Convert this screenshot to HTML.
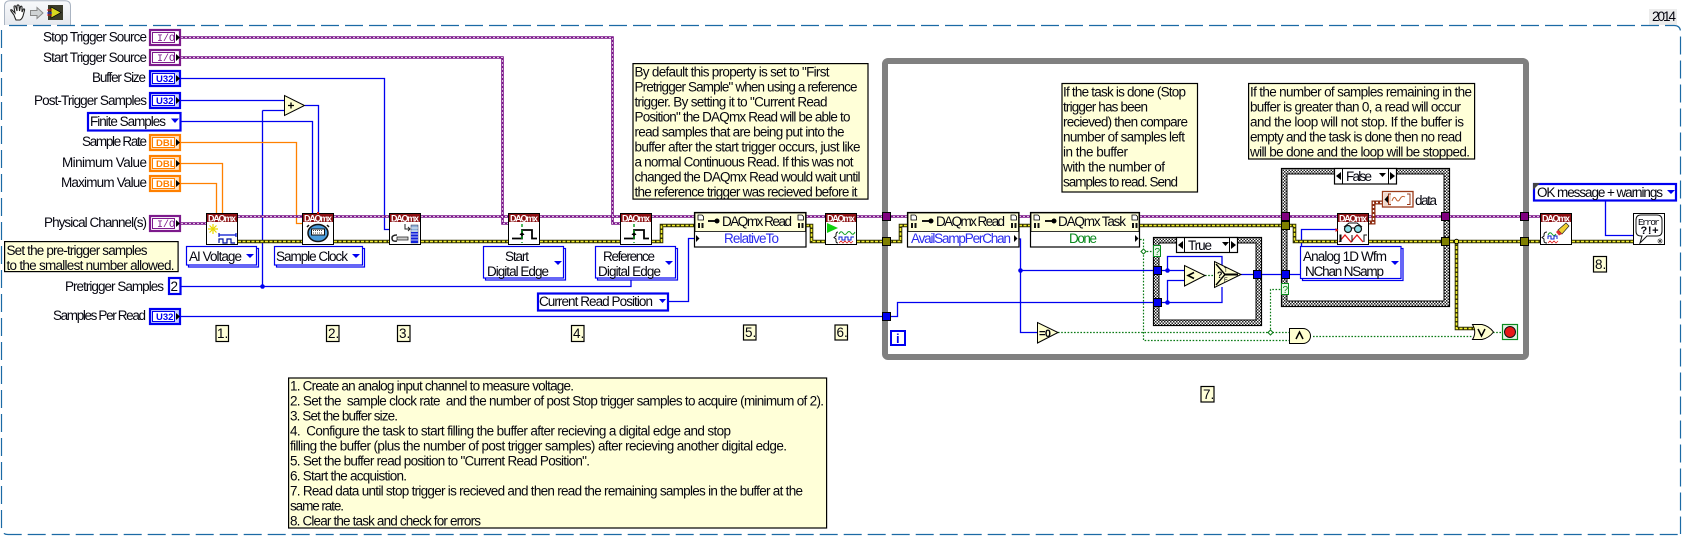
<!DOCTYPE html>
<html><head><meta charset="utf-8"><title>LabVIEW block diagram</title>
<style>
html,body{margin:0;padding:0;background:#fff;width:1682px;height:536px;overflow:hidden}
svg{display:block}
text{font-family:"Liberation Sans",sans-serif;font-size:13.5px;fill:#05050f}
.b{fill:none;stroke:#0000f0;stroke-width:1.3}
.o{fill:none;stroke:#ff8000;stroke-width:1.3}
.p1{fill:none;stroke:#7a1488;stroke-width:2.6}
.p2{fill:none;stroke:#fff;stroke-width:.7;stroke-dasharray:2 2}
.e1{fill:none;stroke:#303000;stroke-width:3.6}
.e2{fill:none;stroke:#f2ee30;stroke-width:1.6;stroke-dasharray:3 1.5}
.g{fill:none;stroke:#0a7a14;stroke-width:1.2;stroke-dasharray:1.6 1.6}
.c{fill:#ffffd8;stroke:#000;stroke-width:1.2}
.tri{fill:#ffffd0;stroke:#000;stroke-width:1}
.h{font-size:9px;font-weight:bold;fill:#fff}
.ring{fill:#fff;stroke:#0000f0;stroke-width:1.2}
.ar{fill:#0000f0}
.tun{stroke:#000;stroke-width:1}
.mono{font-family:"Liberation Mono",monospace;font-size:10px}
.ub{font-size:9.5px;font-weight:bold}
</style></head>
<body>
<svg width="1682" height="536" viewBox="0 0 1682 536" xmlns="http://www.w3.org/2000/svg">
<defs>
<pattern id="dith" width="3" height="3" patternUnits="userSpaceOnUse"><rect width="3" height="3" fill="#fff"/><rect width="1.500" height="1.500" fill="#222"/><rect x="1.500" y="1.500" width="1.500" height="1.500" fill="#222"/></pattern>
<linearGradient id="tabg" x1="0" y1="0" x2="0" y2="1"><stop offset="0" stop-color="#f8f9fb"/><stop offset="1" stop-color="#e6e9ee"/></linearGradient>
</defs>

<!-- toolbar tab -->
<path d="M4.500 25V6Q4.500 .7 10 .7H65Q70.500 .7 70.500 6V25" fill="url(#tabg)" stroke="#aab4c2"/>
<path d="M14 15L11 11Q10 9 12 10L15 13L14 7Q14 5.500 15.500 6L17 11V5.500Q18 4.500 19 5.500L19.500 11L20.500 6.500Q22 5.500 22 7.500L22 12L23.500 9Q25 8.500 24.500 10.500L23 16Q22 19 20 20H16Q15 18 14 15Z" fill="#fff" stroke="#222" stroke-width="1.100"/>
<path d="M30.500 10.500H37V7.500L43 13L37 18.500V15.500H30.500Z" fill="#cfd2d4" stroke="#888"/>
<rect x="48" y="5" width="15" height="15" fill="#3a3a2a"/>
<path d="M51 7V18L61 12.500Z" fill="#d8d820" stroke="#000" stroke-width=".7"/>
<path d="M47 10H52M47 15H52" stroke="#e02020" stroke-width="1"/><path d="M47 13H52" stroke="#2030e0" stroke-width="1"/>

<!-- year -->
<rect x="1649" y="9" width="28" height="16" fill="#ececec"/>
<text x="1652" y="21" textLength="24">2014</text>

<!-- frame -->
<g fill="none" stroke="#1b6aa5" stroke-width="1.200">
<path d="M9 25.500H1674Q1680.500 25.500 1680.500 32V534" stroke-dasharray="18 6"/>
<path d="M1.500 30V527Q1.500 534.500 8 534.500H1680" stroke-dasharray="18 6"/>
</g>

<!-- while loop -->
<rect x="885" y="61" width="641" height="296" rx="3" fill="none" stroke="#808080" stroke-width="6"/>

<!-- case structures -->
<rect x="1153.500" y="237.500" width="108" height="88" fill="url(#dith)" stroke="#000" stroke-width="1.200"/>
<rect x="1159" y="243" width="97" height="77" fill="#fff" stroke="#000" stroke-width="1"/>
<rect x="1281.500" y="168.500" width="168" height="138" fill="url(#dith)" stroke="#000" stroke-width="1.200"/>
<rect x="1287" y="174" width="157" height="127" fill="#fff" stroke="#000" stroke-width="1"/>

<!-- blue wires -->
<path class="b" d="M181 78.500H384.500V229.500H389M181 100.500H284M262.500 110.500H284M262.500 110.500V286.500M181 286.500H631V279M305 105.500H318.500V213M181 121.500H312.500V213M181 316.500H885M889 316.500H897.500V302.500H1153M1019 239H1020.500V332.500H1037M1020.500 270.500H1153M668 301.500H688.500V238.500H694M1262 274.500H1282M1290 274.500H1300M1301.500 246V229.500H1337M1605.500 201V235.500H1633"/>
<path class="b" d="M1162 270.500H1184M1167.500 270.500V256.500H1222V265M1162 302.500H1222V287M1167.500 302.500V280.500H1184M1241 274.500H1253"/>
<circle cx="262.500" cy="286.500" r="2.300" fill="#0000f0"/><circle cx="1020.500" cy="270.500" r="2.300" fill="#0000f0"/>
<circle cx="1167.500" cy="270.500" r="2.300" fill="#0000f0"/><circle cx="1167.500" cy="302.500" r="2.300" fill="#0000f0"/>

<!-- orange wires -->
<path class="o" d="M181 142.500H296.500V223.500H302M181 163.500H222.500V213M181 183.500H216.500V213"/>

<!-- purple wires -->
<path class="p1" d="M181 37.500H612.500V223.500H620M181 57.500H502.500V223.500H508M181 223.500H206M238 216.500H302M334 216.500H389M421 216.500H508M540 216.500H620M652 216.500H694M806 216.500H825M857 216.500H907M1019 216.500H1030M1140 216.500H1337M1369 216.500H1540"/>
<path class="p2" d="M181 37.500H612.500V223.500H620M181 57.500H502.500V223.500H508M181 223.500H206M238 216.500H302M334 216.500H389M421 216.500H508M540 216.500H620M652 216.500H694M806 216.500H825M857 216.500H907M1019 216.500H1030M1140 216.500H1337M1369 216.500H1540"/>

<!-- error wires -->
<path class="e1" d="M238 241.500H302M334 241.500H389M421 241.500H508M540 241.500H620M652 241.500H661.500V225.500H694M806 225.500H811.500V241.500H825M857 241.500H900.500V225.500H907M1019 225.500H1030M1140 225.500H1294.500V241.500H1337M1369 241.500H1540M1572 241.500H1633M1456.500 241.500V328.500H1475"/>
<path class="e2" d="M238 241.500H302M334 241.500H389M421 241.500H508M540 241.500H620M652 241.500H661.500V225.500H694M806 225.500H811.500V241.500H825M857 241.500H900.500V225.500H907M1019 225.500H1030M1140 225.500H1294.500V241.500H1337M1369 241.500H1540M1572 241.500H1633M1456.500 241.500V328.500H1475"/>
<circle cx="1456.500" cy="241.500" r="2.200" fill="#f2ee30" stroke="#000"/>

<!-- green boolean wires -->
<path class="g" d="M1140 239.500H1143.500V340.500H1289M1143.500 251.500H1153M1058 332.500H1289M1270.500 332.500V289.500H1281M1313 336.500H1472M1205 275.500H1214M1493 332.500H1502"/>
<path d="M1143.500 249L1146 251.500L1143.500 254L1141 251.500Z" fill="#fff" stroke="#0a7a14"/>
<path d="M1270.500 330L1273 332.500L1270.500 335L1268 332.500Z" fill="#fff" stroke="#0a7a14"/>

<!-- data wire -->
<path d="M1368 222.500H1373.500V202.500H1382" fill="none" stroke="#8e2c10" stroke-width="4"/>
<path d="M1368 222.500H1373.500V202.500H1382" fill="none" stroke="#fff" stroke-width="1.400" stroke-dasharray="2 2"/>

<!-- tunnels -->
<g class="tun">
<rect x="882.500" y="212.500" width="8" height="8" fill="#800080"/>
<rect x="882.500" y="237.500" width="8" height="8" fill="#808000"/>
<rect x="882.500" y="312.500" width="8" height="8" fill="#0000f0"/>
<rect x="1520.500" y="212.500" width="8" height="8" fill="#800080"/>
<rect x="1520.500" y="237.500" width="8" height="8" fill="#808000"/>
<rect x="1281.500" y="212.500" width="8" height="8" fill="#800080"/>
<rect x="1281.500" y="221.500" width="8" height="8" fill="#808000"/>
<rect x="1281.500" y="270.500" width="8" height="8" fill="#0000f0"/>
<rect x="1441.500" y="212.500" width="8" height="8" fill="#800080"/>
<rect x="1441.500" y="237.500" width="8" height="8" fill="#808000"/>
<rect x="1153.500" y="266.500" width="8" height="8" fill="#0000f0"/>
<rect x="1153.500" y="298.500" width="8" height="8" fill="#0000f0"/>
<rect x="1253.500" y="270.500" width="8" height="8" fill="#0000f0"/>
</g>

<!-- selector terminals -->
<rect x="1153.500" y="245.500" width="7" height="11" fill="#e8f8e8" stroke="#0a8a1e"/>
<text x="1154.500" y="255" style="font-size:10px;fill:#0a8a1e">?</text>
<rect x="1281.500" y="283.500" width="7" height="11" fill="#e8f8e8" stroke="#0a8a1e"/>
<text x="1282.500" y="293" style="font-size:10px;fill:#0a8a1e">?</text>

<!-- iteration -->
<rect x="891" y="331" width="14" height="14" fill="#fff" stroke="#0000f0" stroke-width="2"/>
<text x="896" y="343" style="font-weight:bold;fill:#0000f0;font-size:13px">i</text>

<!-- case selectors -->
<rect x="1176.500" y="237.500" width="61" height="15" fill="#fff" stroke="#000" stroke-width="1.200"/>
<path d="M1184.500 238V252M1229.500 238V252" stroke="#000"/>
<path d="M1183 241V249L1178 245ZM1231 241V249L1236 245ZM1222 242H1229L1225.500 246Z" fill="#000"/>
<text x="1188" y="250" textLength="24">True</text>
<rect x="1334.500" y="168.500" width="62" height="15.500" fill="#fff" stroke="#000" stroke-width="1.200"/>
<path d="M1342.500 169V184M1388.500 169V184" stroke="#000"/>
<path d="M1341 172V180L1336 176ZM1390 172V180L1395 176ZM1379 173H1386L1382.500 177Z" fill="#000"/>
<text x="1346" y="181" textLength="26">False</text>

<!-- labels -->
<text x="43" y="41.500" textLength="104">Stop Trigger Source</text>
<text x="43" y="62" textLength="104">Start Trigger Source</text>
<text x="92" y="82" textLength="54">Buffer Size</text>
<text x="34" y="105" textLength="113">Post-Trigger Samples</text>
<text x="82" y="146" textLength="65">Sample Rate</text>
<text x="62" y="167" textLength="85">Minimum Value</text>
<text x="61" y="187" textLength="86">Maximum Value</text>
<text x="44" y="227" textLength="103">Physical Channel(s)</text>
<text x="65" y="291" textLength="99">Pretrigger Samples</text>
<text x="53" y="320" textLength="93">Samples Per Read</text>

<!-- terminals I/O -->
<g>
<rect x="150" y="30" width="30" height="15" fill="#fff" stroke="#7d1a8c" stroke-width="2.200"/><rect x="152.500" y="32.500" width="22" height="10" fill="#fff" stroke="#7d1a8c"/><text class="mono" x="157" y="41" style="fill:#7d1a8c">I/O</text><path d="M176 34V41L180 37.500Z" fill="#000"/>
<rect x="150" y="50" width="30" height="15" fill="#fff" stroke="#7d1a8c" stroke-width="2.200"/><rect x="152.500" y="52.500" width="22" height="10" fill="#fff" stroke="#7d1a8c"/><text class="mono" x="157" y="61" style="fill:#7d1a8c">I/O</text><path d="M176 54V61L180 57.500Z" fill="#000"/>
<rect x="150" y="216" width="30" height="15" fill="#fff" stroke="#7d1a8c" stroke-width="2.200"/><rect x="152.500" y="218.500" width="22" height="10" fill="#fff" stroke="#7d1a8c"/><text class="mono" x="157" y="227" style="fill:#7d1a8c">I/O</text><path d="M176 220V227L180 223.500Z" fill="#000"/>
</g>
<!-- terminals U32 -->
<g>
<rect x="150" y="71" width="30" height="15" fill="#c8d0ff" stroke="#0000f0" stroke-width="2.200"/><rect x="152.500" y="73.500" width="22" height="10" fill="#fff" stroke="#0000f0"/><text class="ub" x="156" y="82" style="fill:#0000f0">U32</text><path d="M176 75V82L180 78.500Z" fill="#000"/>
<rect x="150" y="93" width="30" height="15" fill="#c8d0ff" stroke="#0000f0" stroke-width="2.200"/><rect x="152.500" y="95.500" width="22" height="10" fill="#fff" stroke="#0000f0"/><text class="ub" x="156" y="104" style="fill:#0000f0">U32</text><path d="M176 97V104L180 100.500Z" fill="#000"/>
<rect x="150" y="309" width="30" height="15" fill="#c8d0ff" stroke="#0000f0" stroke-width="2.200"/><rect x="152.500" y="311.500" width="22" height="10" fill="#fff" stroke="#0000f0"/><text class="ub" x="156" y="320" style="fill:#0000f0">U32</text><path d="M176 313V320L180 316.500Z" fill="#000"/>
</g>
<!-- terminals DBL -->
<g>
<rect x="150" y="135" width="30" height="15" fill="#ffe2c0" stroke="#ff8000" stroke-width="2.200"/><rect x="152.500" y="137.500" width="22" height="10" fill="#fff" stroke="#ff8000"/><text class="ub" x="156" y="146" style="fill:#ff8000">DBL</text><path d="M176 139V146L180 142.500Z" fill="#000"/>
<rect x="150" y="156" width="30" height="15" fill="#ffe2c0" stroke="#ff8000" stroke-width="2.200"/><rect x="152.500" y="158.500" width="22" height="10" fill="#fff" stroke="#ff8000"/><text class="ub" x="156" y="167" style="fill:#ff8000">DBL</text><path d="M176 160V167L180 163.500Z" fill="#000"/>
<rect x="150" y="176" width="30" height="15" fill="#ffe2c0" stroke="#ff8000" stroke-width="2.200"/><rect x="152.500" y="178.500" width="22" height="10" fill="#fff" stroke="#ff8000"/><text class="ub" x="156" y="187" style="fill:#ff8000">DBL</text><path d="M176 180V187L180 183.500Z" fill="#000"/>
</g>

<!-- constants -->
<rect x="88" y="113" width="92.500" height="17.500" fill="#fff" stroke="#0000f0" stroke-width="2.200"/>
<text x="90" y="126" textLength="76">Finite Samples</text>
<path class="ar" d="M171 118.500H179L175 123Z"/>
<rect x="169" y="278" width="11.500" height="16" fill="#fff" stroke="#0000f0" stroke-width="2.200"/>
<text x="170.500" y="291">2</text>
<rect x="538" y="293.500" width="130" height="17" fill="#fff" stroke="#0000f0" stroke-width="2.200"/>
<text x="539" y="306" textLength="114">Current Read Position</text>
<path class="ar" d="M659 299H666L662.500 303Z"/>

<!-- rings with shadow -->
<rect class="ring" x="188.500" y="248.500" width="70" height="18.500"/><rect class="ring" x="186.500" y="246.500" width="70" height="18.500"/>
<text x="189" y="261" textLength="53">AI Voltage</text><path class="ar" d="M246 254H254L250 258Z"/>
<rect class="ring" x="276.500" y="248.500" width="88" height="18.500"/><rect class="ring" x="274.500" y="246.500" width="88" height="18.500"/>
<text x="276" y="261" textLength="72">Sample Clock</text><path class="ar" d="M352 254H360L356 258Z"/>
<rect class="ring" x="485.500" y="248.500" width="80" height="31.500"/><rect class="ring" x="483.500" y="246.500" width="80" height="31.500"/>
<text x="505" y="261" textLength="24">Start</text><text x="487" y="276" textLength="62">Digital Edge</text><path class="ar" d="M554 261H562L558 265Z"/>
<rect class="ring" x="597.500" y="248.500" width="80" height="31.500"/><rect class="ring" x="595.500" y="246.500" width="80" height="31.500"/>
<text x="603" y="261" textLength="52">Reference</text><text x="598" y="276" textLength="63">Digital Edge</text><path class="ar" d="M665 261H673L669 265Z"/>
<rect class="ring" x="1302.500" y="248.500" width="100.500" height="32"/><rect class="ring" x="1300.500" y="246.500" width="100.500" height="32"/>
<text x="1303" y="261" textLength="84">Analog 1D Wfm</text><text x="1305" y="276" textLength="79">NChan NSamp</text><path class="ar" d="M1391 261H1399L1395 265Z"/>

<rect x="1534" y="184" width="142" height="16.500" fill="#fff" stroke="#0000f0" stroke-width="2.200"/>
<path d="M1533 183H1540L1533 190Z" fill="#444"/>
<text x="1537" y="197" textLength="126">OK message + warnings</text>
<path class="ar" d="M1667 190H1675L1671 194Z"/>

<!-- primitives -->
<path class="tri" d="M284.500 95.500V115.500L304.500 105.500Z"/>
<path d="M288 105.500H294M291 102.500V108.500" stroke="#000" stroke-width="1.300"/>
<path class="tri" d="M1037.500 322.500V343L1058 332.500Z"/>
<text x="1039" y="337" textLength="12" style="font-size:11px;font-weight:bold">=0</text>
<path class="tri" d="M1184.500 265.500V286L1205 275.500Z"/>
<path d="M1194 272.500L1188 275.500L1194 278.500" fill="none" stroke="#000" stroke-width="1.600"/>
<path class="tri" d="M1214.500 261.500V287.500L1241 274.500Z"/>
<path d="M1216 264L1225 274.500L1216 285" fill="none" stroke="#000" stroke-width="1.400"/>
<path d="M1225 274.500H1238" fill="none" stroke="#000" stroke-width="2"/>
<text x="1217" y="278" style="font-size:9px;font-weight:bold">?</text>
<text x="1224" y="272" style="font-size:6px">T</text><text x="1224" y="282" style="font-size:6px">F</text>
<path class="tri" d="M1289.500 328.500H1303A7.500 7.500 0 0 1 1303 343.500H1289.500Z"/>
<path d="M1296 339L1299.500 332L1303 339" fill="none" stroke="#000" stroke-width="1.500"/>
<path class="tri" d="M1472.500 324.500H1482Q1489 326 1493.500 332Q1489 338 1482 339.500H1472.500Q1477 332 1472.500 324.500Z"/>
<path d="M1478 329L1481.500 336L1485 329" fill="none" stroke="#000" stroke-width="1.500"/>
<rect x="1502.500" y="324.500" width="15" height="15" fill="#e6f5e6" stroke="#0a8a1e" stroke-width="1.200"/>
<circle cx="1510" cy="332" r="5.500" fill="#e81818" stroke="#111" stroke-width="1"/>

<!-- property nodes -->
<rect x="694.500" y="212.500" width="111.500" height="34.500" fill="#fff" stroke="#000" stroke-width="1.200"/>
<rect x="695" y="213" width="110.500" height="18.500" fill="#ffffd8" stroke="#000" stroke-width=".8"/>
<path d="M698 215H702L703.500 216.500V220H698ZM798 215H802L803.500 216.500V220H798Z" fill="#fff" stroke="#000" stroke-width=".8"/>
<path d="M698 223H700V228H698ZM701.500 223H703.500V228H701.500ZM798 223H800V228H798ZM801.500 223H803.500V228H801.500Z" fill="#111"/>
<circle cx="717" cy="221" r="2.500" fill="#000"/><path d="M708 221H717" stroke="#000" stroke-width="1.800"/>
<text x="722" y="226" textLength="70">DAQmx Read</text>
<text x="724" y="243" textLength="55" style="fill:#2a2aee">RelativeTo</text>
<path d="M696 235V242L699.500 238.500Z" fill="#000"/>

<rect x="907.500" y="212.500" width="111.500" height="34.500" fill="#fff" stroke="#000" stroke-width="1.200"/>
<rect x="908" y="213" width="110.500" height="18.500" fill="#ffffd8" stroke="#000" stroke-width=".8"/>
<path d="M911 215H915L916.500 216.500V220H911ZM1011 215H1015L1016.500 216.500V220H1011Z" fill="#fff" stroke="#000" stroke-width=".8"/>
<path d="M911 223H913V228H911ZM914.500 223H916.500V228H914.500ZM1011 223H1013V228H1011ZM1014.500 223H1016.500V228H1014.500Z" fill="#111"/>
<circle cx="931" cy="221" r="2.500" fill="#000"/><path d="M922 221H931" stroke="#000" stroke-width="1.800"/>
<text x="936" y="226" textLength="69">DAQmx Read</text>
<text x="911" y="243" textLength="100" style="fill:#2a2aee">AvailSampPerChan</text>
<path d="M1014 235V242L1017.500 238.500Z" fill="#000"/>

<rect x="1030.500" y="212.500" width="109" height="34.500" fill="#fff" stroke="#000" stroke-width="1.200"/>
<rect x="1031" y="213" width="108" height="18.500" fill="#ffffd8" stroke="#000" stroke-width=".8"/>
<path d="M1034 215H1038L1039.500 216.500V220H1034ZM1132 215H1136L1137.500 216.500V220H1132Z" fill="#fff" stroke="#000" stroke-width=".8"/>
<path d="M1034 223H1036V228H1034ZM1037.500 223H1039.500V228H1037.500ZM1132 223H1134V228H1132ZM1135.500 223H1137.500V228H1135.500Z" fill="#111"/>
<circle cx="1054" cy="221" r="2.500" fill="#000"/><path d="M1045 221H1054" stroke="#000" stroke-width="1.800"/>
<text x="1058" y="226" textLength="68">DAQmx Task</text>
<text x="1069" y="243" textLength="28" style="fill:#0a8a1e">Done</text>
<path d="M1135 235V242L1138.500 238.500Z" fill="#000"/>

<!-- DAQmx node 1 -->
<g transform="translate(206,213)"><rect x=".5" y=".5" width="31" height="31" fill="#fff" stroke="#000"/><rect x="1" y="1" width="30" height="8" fill="#8c0f12"/><text class="h" x="2" y="8.300" textLength="28">DAQmx</text>
<path d="M7 11V21M2 16H12M3.500 12.500L10.500 19.500M10.500 12.500L3.500 19.500" stroke="#e8d800" stroke-width="1.200"/>
<path d="M13 22H30M13 20V24M30 20V24" stroke="#0010d0" stroke-width="1.200" fill="none"/>
<path d="M13 30V26H17V30H21V26H25V30H29" fill="none" stroke="#0010a0" stroke-width="1.200"/></g>
<!-- node 2 -->
<g transform="translate(302,213)"><rect x=".5" y=".5" width="31" height="31" fill="#fff" stroke="#000"/><rect x="1" y="1" width="30" height="8" fill="#8c0f12"/><text class="h" x="2" y="8.300" textLength="28">DAQmx</text>
<ellipse cx="16" cy="20" rx="10" ry="8.500" fill="#4a9cdc" stroke="#111" stroke-width="1.500"/><rect x="9.500" y="16" width="13" height="6" fill="#fff" stroke="#111"/><path d="M11 17.500H21M11 20H21" stroke="#444" stroke-dasharray="1 1"/><path d="M15 0H17" stroke="#e01010" stroke-width="2"/><path d="M7 12L5 14M25 12L27 14" stroke="#111" stroke-width="1.500"/></g>
<!-- node 3 -->
<g transform="translate(389,213)"><rect x=".5" y=".5" width="31" height="31" fill="#fff" stroke="#000"/><rect x="1" y="1" width="30" height="8" fill="#8c0f12"/><text class="h" x="2" y="8.300" textLength="28">DAQmx</text>
<path d="M8 24H19V27H8V24Z" fill="#ccc" stroke="#222" stroke-width=".8"/><path d="M8 22Q3 22 3 25Q3 29 8 28" fill="none" stroke="#222" stroke-width="1.500"/>
<rect x="22" y="12" width="7" height="18" fill="#8fb0d8" stroke="#335" stroke-width=".5"/><rect x="22" y="19" width="7" height="11" fill="#1020d8"/><path d="M22 15H29M22 18H29M22 21H29M22 24H29M22 27H29" stroke="#fff" stroke-width=".7"/>
<path d="M16 11V16H21M19 14L21 16L19 18" fill="none" stroke="#222"/></g>
<!-- node 4 -->
<g transform="translate(508,213)"><rect x=".5" y=".5" width="31" height="31" fill="#fff" stroke="#000"/><rect x="1" y="1" width="30" height="8" fill="#8c0f12"/><text class="h" x="2" y="8.300" textLength="28">DAQmx</text>
<path d="M4 25.500H14V17H24V25.500H29" fill="none" stroke="#000" stroke-width="1.800"/><path d="M11.500 22L14 18.500L16.500 22Z" fill="#000"/><path d="M14 11V30" stroke="#0a9a1e" stroke-width="1.400" stroke-dasharray="3 3"/></g>
<!-- node 5 -->
<g transform="translate(620,213)"><rect x=".5" y=".5" width="31" height="31" fill="#fff" stroke="#000"/><rect x="1" y="1" width="30" height="8" fill="#8c0f12"/><text class="h" x="2" y="8.300" textLength="28">DAQmx</text>
<path d="M4 25.500H14V17H24V25.500H29" fill="none" stroke="#000" stroke-width="1.800"/><path d="M11.500 22L14 18.500L16.500 22Z" fill="#000"/><path d="M14 11V30" stroke="#0a9a1e" stroke-width="1.400" stroke-dasharray="3 3"/></g>
<!-- node 6 start -->
<g transform="translate(825,213)"><rect x=".5" y=".5" width="31" height="31" fill="#fff" stroke="#000"/><rect x="1" y="1" width="30" height="8" fill="#8c0f12"/><text class="h" x="2" y="8.300" textLength="28">DAQmx</text>
<path d="M2 10V20L13 15Z" fill="#10d010"/>
<path d="M13 19Q11 19 11 22V23L9 24.500L11 26V28Q11 30 13 30" fill="none" stroke="#111"/>
<path d="M14 21Q16 17 18 20T22 20T26 20T30 19" fill="none" stroke="#10a020"/><path d="M14 27V24H17V27H20V24H23V27H26V24H29" fill="none" stroke="#1020d0"/><path d="M14 30L16 28L18 30L20 28L22 30L24 28L26 30L28 28" fill="none" stroke="#e02020" stroke-width=".8"/></g>
<!-- read node -->
<g transform="translate(1337,213)"><rect x=".5" y=".5" width="31" height="31" fill="#fff" stroke="#000"/><rect x="1" y="1" width="30" height="8" fill="#8c0f12"/><text class="h" x="2" y="8.300" textLength="28">DAQmx</text>
<circle cx="11" cy="16" r="3.500" fill="#8fe0e8" stroke="#111" stroke-width="1.200"/><circle cx="21" cy="16" r="3.500" fill="#8fe0e8" stroke="#111" stroke-width="1.200"/><path d="M14 15H18M7 14L12 10H20L25 14" fill="none" stroke="#111"/>
<path d="M2 29L8 22L14 29L20 22L26 29" fill="none" stroke="#e01818" stroke-width="1.300"/><path d="M3 29V22H4V29M15 29V22M27 29V22H30" fill="none" stroke="#111"/><path d="M-1.500 15V19L1.500 17Z" fill="#e01818"/></g>
<!-- clear node -->
<g transform="translate(1540,213)"><rect x=".5" y=".5" width="31" height="31" fill="#fff" stroke="#000"/><rect x="1" y="1" width="30" height="8" fill="#8c0f12"/><text class="h" x="2" y="8.300" textLength="28">DAQmx</text>
<path d="M18 17L26 10L29 13L22 21Z" fill="#f0d030" stroke="#222" stroke-width=".7"/><path d="M18 17L16 19L19 22.500L22 21Z" fill="#e03030"/>
<path d="M7 19Q4 19 4 22V23L2 24.500L4 26V28Q4 30 7 30" fill="none" stroke="#111"/>
<path d="M8 22Q10 18 12 21T16 21" fill="none" stroke="#10a020"/><path d="M8 26V23H11V26H14V23H17V26" fill="none" stroke="#1020d0"/><path d="M8 30L10 28L12 30L14 28L16 30L18 28" fill="none" stroke="#e02020" stroke-width=".8"/></g>
<!-- error node -->
<g transform="translate(1633,213)"><rect x=".5" y=".5" width="31" height="31" fill="#fff" stroke="#000"/>
<path d="M8 2H24Q29 2 29 7V18Q29 23 24 23H14L7 30L9 23H8Q3 23 3 18V7Q3 2 8 2Z" fill="#fff" stroke="#111"/>
<text x="5" y="12" textLength="22" style="font-size:9.500px;font-family:'Liberation Mono',monospace">Error</text>
<text x="7.500" y="21" textLength="18" style="font-size:11px;font-weight:bold">?!+</text>
<path d="M25 26L29 30M29 26L25 30M27 25V31M24 28H30" stroke="#333" stroke-width=".6"/></g>

<!-- data indicator -->
<rect x="1382.500" y="191.500" width="30.500" height="15.500" fill="#fff" stroke="#9a3a18" stroke-width="1.300"/>
<rect x="1384" y="193" width="7" height="13" fill="#f0d8cc"/>
<path d="M1388 195.500V203L1384.500 199.500Z" fill="#000"/>
<path d="M1391 194H1388.500V204.500H1391M1407 194H1410V204.500H1407" fill="none" stroke="#9a3a18"/>
<path d="M1392 201Q1394 195 1396 199T1400 199T1405 197" fill="none" stroke="#c06030"/>
<text x="1415" y="205" textLength="22">data</text>

<!-- comments -->
<rect class="c" x="4.600" y="241.600" width="173.500" height="30"/>
<text x="6.500" y="255" textLength="141">Set the pre-trigger samples</text>
<text x="6.500" y="270" textLength="168">to the smallest number allowed.</text>

<rect class="c" x="633" y="63.600" width="235" height="135.500"/>
<text x="634.500" y="76.500" textLength="195">By default this property is set to "First</text>
<text x="634.500" y="91.500" textLength="223">Pretrigger Sample" when using a reference</text>
<text x="634.500" y="106.500" textLength="193">trigger. By setting it to "Current Read</text>
<text x="634.500" y="121.500" textLength="216">Position" the DAQmx Read will be able to</text>
<text x="634.500" y="136.500" textLength="210">read samples that are being put into the</text>
<text x="634.500" y="151.500" textLength="226">buffer after the start trigger occurs, just like</text>
<text x="634.500" y="166.500" textLength="219">a normal Continuous Read. If this was not</text>
<text x="634.500" y="181.500" textLength="226">changed the DAQmx Read would wait until</text>
<text x="634.500" y="196.500" textLength="223">the reference trigger was recieved before it</text>

<rect class="c" x="1062" y="83.500" width="135.500" height="108.500"/>
<text x="1063" y="96.500" textLength="123">If the task is done (Stop</text>
<text x="1063" y="111.500" textLength="85">trigger has been</text>
<text x="1063" y="126.500" textLength="125">recieved) then compare</text>
<text x="1063" y="141.500" textLength="122">number of samples left</text>
<text x="1063" y="156.500" textLength="65">in the buffer</text>
<text x="1063" y="171.500" textLength="102">with the number of</text>
<text x="1063" y="186.500" textLength="115">samples to read. Send</text>

<rect class="c" x="1248.600" y="83.500" width="226" height="75.500"/>
<text x="1250" y="96.500" textLength="222">If the number of samples remaining in the</text>
<text x="1250" y="111.500" textLength="211">buffer is greater than 0, a read will occur</text>
<text x="1250" y="126.500" textLength="214">and the loop will not stop. If the buffer is</text>
<text x="1250" y="141.500" textLength="212">empty and the task is done then no read</text>
<text x="1250" y="156.500" textLength="220">will be done and the loop will be stopped.</text>

<rect class="c" x="288.600" y="378" width="538" height="150"/>
<text x="290" y="390.500" textLength="284">1. Create an analog input channel to measure voltage.</text>
<text x="290" y="405.500" textLength="534" xml:space="preserve">2. Set the  sample clock rate  and the number of post Stop trigger samples to acquire (minimum of 2).</text>
<text x="290" y="420.500" textLength="108">3. Set the buffer size.</text>
<text x="290" y="435.500" textLength="441" xml:space="preserve">4.  Configure the task to start filling the buffer after recieving a digital edge and stop</text>
<text x="290" y="450.500" textLength="497">filling the buffer (plus the number of post trigger samples) after recieving another digital edge.</text>
<text x="290" y="465.500" textLength="300">5. Set the buffer read position to "Current Read Position".</text>
<text x="290" y="480.500" textLength="117">6. Start the acquistion.</text>
<text x="290" y="495.500" textLength="513">7. Read data until stop trigger is recieved and then read the remaining samples in the buffer at the</text>
<text x="290" y="510.500" textLength="54">same rate.</text>
<text x="290" y="525.500" textLength="191">8. Clear the task and check for errors</text>

<!-- step numbers -->
<rect class="c" x="216" y="325.500" width="12.500" height="16"/><text x="217" y="338">1.</text>
<rect class="c" x="326.500" y="325.500" width="12.500" height="16"/><text x="328" y="338">2.</text>
<rect class="c" x="397.500" y="325.500" width="12.500" height="16"/><text x="399" y="338">3.</text>
<rect class="c" x="571.500" y="325.500" width="12.500" height="16"/><text x="573" y="338">4.</text>
<rect class="c" x="743.500" y="325" width="12.500" height="15"/><text x="745" y="337">5.</text>
<rect class="c" x="835" y="325" width="12.500" height="15"/><text x="836.500" y="337">6.</text>
<rect class="c" x="1201" y="386.500" width="13" height="15.500"/><text x="1203" y="399">7.</text>
<rect class="c" x="1593.500" y="256.500" width="13" height="15.500"/><text x="1595" y="269">8.</text>
</svg>
</body></html>
